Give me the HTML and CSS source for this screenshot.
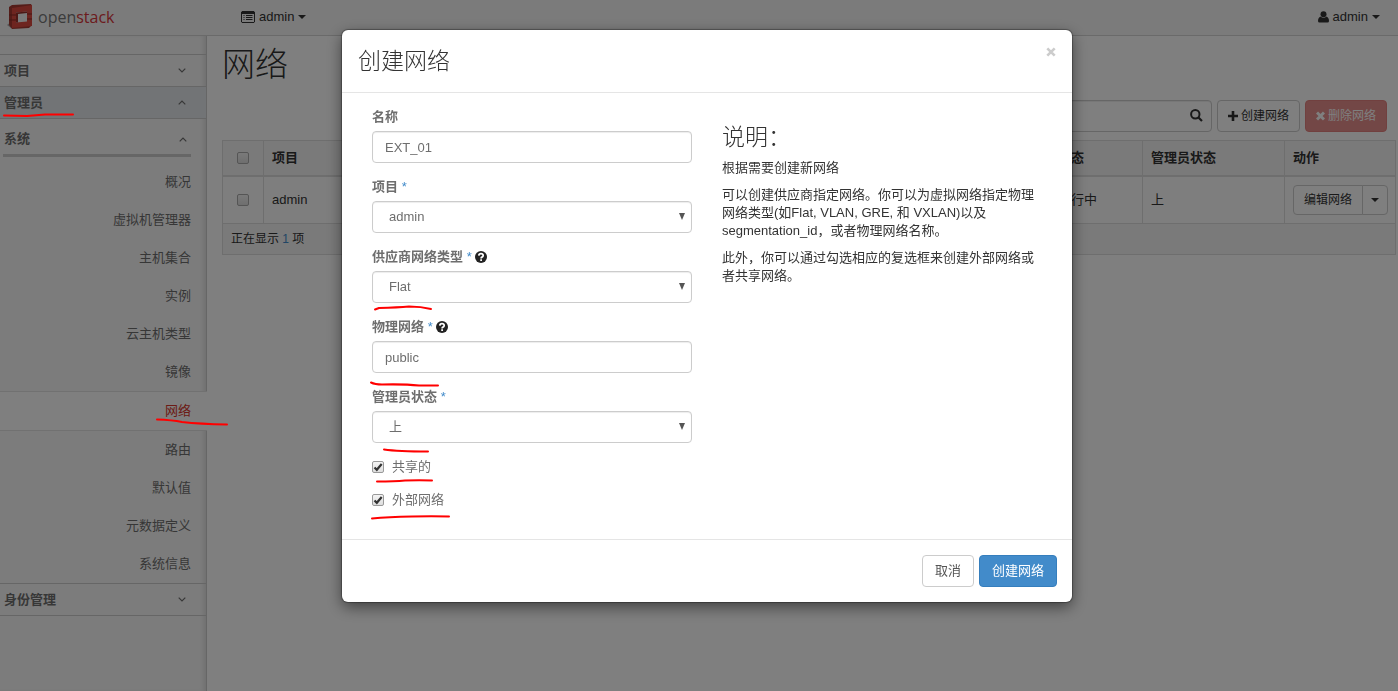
FILE: index.html
```
<!DOCTYPE html>
<html lang="zh-CN">
<head>
<meta charset="utf-8">
<title>网络 - OpenStack Dashboard</title>
<link rel="stylesheet" href="styles.css">
</head>
<body>
<header class="topbar">
  <a class="brand" href="#">
    <svg class="brand-mark" width="28" height="26" viewBox="0 0 28 26" aria-hidden="true">
      <path d="M0 21l4-3v6z" fill="#aaa"/>
      <path d="M2 3L5 1l19-1 1 2v19l-3 3-17 1-3-4z" fill="#a83a32"/>
      <path d="M5 4l20-3v21L5 24z" fill="#dc4a40"/>
      <path d="M9 8.500l11-1v10l-11 1z" fill="#f4f4f4"/>
      <path d="M9 8.500l11-1v1.500l-9 1v8.500H9z" fill="#98302a"/>
      <path d="M2 11h7M20 10h5M2 16h7M20 15h5" stroke="#8b2a25" fill="none"/>
    </svg>
    <span class="brand-text">open<b>stack</b></span>
  </a>
  <a class="nav-link" href="#">
    <svg width="14" height="12" viewBox="0 0 14 12" aria-hidden="true"><path d="M1 .5h12l.5.5v10l-.5.5H1L.5 11V1z" fill="none" stroke="currentColor"/><path d="M1 1h12v2H1z" fill="currentColor"/><path d="M2.500 4.500h1M5 4.500h6.500M2.500 6.500h1M5 6.500h6.500M2.500 8.500h1M5 8.500h6.500" stroke="currentColor"/></svg>
    admin <span class="caret"></span>
  </a>
  <a class="nav-link user" href="#">
    <svg width="11" height="12" viewBox="0 0 11 12" aria-hidden="true"><circle cx="5.500" cy="3.200" r="3" fill="currentColor"/><path d="M2.500 5.500Q5.500 8 8.500 5.500 11 6.500 11 10q0 1.500-1.500 1.500h-8Q0 11.500 0 10q0-3.500 2.500-4.500z" fill="currentColor"/></svg>
    admin <span class="caret"></span>
  </a>
</header>

<div class="page">
  <nav class="sidebar">
    <a class="section" href="#">项目 <svg width="8" height="5" viewBox="0 0 8 5"><path d="M.7.7L4 4 7.300.7" fill="none" stroke="currentColor" stroke-width="1.200"/></svg></a>
    <a class="section open" href="#">管理员 <svg width="8" height="5" viewBox="0 0 8 5"><path d="M.7 4.300L4 1l3.300 3.300" fill="none" stroke="currentColor" stroke-width="1.200"/></svg></a>
    <div class="group">
      <a class="group-title" href="#">系统 <svg width="8" height="5" viewBox="0 0 8 5"><path d="M.7 4.300L4 1l3.300 3.300" fill="none" stroke="currentColor" stroke-width="1.200"/></svg></a>
      <a class="item" href="#">概况</a>
      <a class="item" href="#">虚拟机管理器</a>
      <a class="item" href="#">主机集合</a>
      <a class="item" href="#">实例</a>
      <a class="item" href="#">云主机类型</a>
      <a class="item" href="#">镜像</a>
      <a class="item active" href="#">网络</a>
      <a class="item" href="#">路由</a>
      <a class="item" href="#">默认值</a>
      <a class="item" href="#">元数据定义</a>
      <a class="item" href="#">系统信息</a>
    </div>
    <a class="section last" href="#">身份管理 <svg width="8" height="5" viewBox="0 0 8 5"><path d="M.7.7L4 4 7.300.7" fill="none" stroke="currentColor" stroke-width="1.200"/></svg></a>
  </nav>

  <main class="content">
    <h1>网络</h1>
    <div class="toolbar">
      <div class="search">
        <input type="search" aria-label="筛选">
        <svg width="13" height="13" viewBox="0 0 13 13" aria-hidden="true"><circle cx="5.300" cy="5.300" r="4.200" fill="none" stroke="currentColor" stroke-width="2"/><path d="M8.500 8.500l3.500 3.500" stroke="currentColor" stroke-width="2.200"/></svg>
      </div>
      <button class="btn small" type="button"><svg width="10" height="10" viewBox="0 0 10 10" aria-hidden="true"><path d="M3.700 0h2.600v3.700H10v2.600H6.300V10H3.700V6.300H0V3.700h3.700z" fill="currentColor"/></svg>创建网络</button>
      <button class="btn small danger" type="button" disabled><svg width="9" height="10" viewBox="0 0 9 10" aria-hidden="true"><path d="M1 1.500l7 7M8 1.500l-7 7" stroke="currentColor" stroke-width="3"/></svg>删除网络</button>
    </div>
    <table class="grid">
      <colgroup><col class="c-check"><col><col class="c-status"><col class="c-admin"><col class="c-action"></colgroup>
      <thead>
        <tr><th><input class="tick" type="checkbox" aria-label="全选"></th><th>项目</th><th>状态</th><th>管理员状态</th><th>动作</th></tr>
      </thead>
      <tbody>
        <tr>
          <td><input class="tick" type="checkbox" aria-label="选择 admin"></td><td>admin</td><td>运行中</td><td>上</td>
          <td><div class="split"><button class="btn small" type="button">编辑网络</button><button class="btn small more" type="button" aria-label="更多动作"><span class="caret"></span></button></div></td>
        </tr>
      </tbody>
      <tfoot><tr><td colspan="5">正在显示 <span class="count">1</span> 项</td></tr></tfoot>
    </table>
  </main>
</div>

<div class="backdrop">
  <form class="modal" role="dialog" aria-labelledby="dlg-title">
    <div class="modal-head">
      <h3 id="dlg-title">创建网络</h3>
      <button class="close" type="button" aria-label="关闭"><svg width="10" height="10" viewBox="0 0 10 10"><path d="M1.300 1.300l7.400 7.400M8.700 1.300L1.300 8.700" stroke="currentColor" stroke-width="2.600"/></svg></button>
    </div>
    <div class="modal-body">
      <div class="fields">
        <div class="field">
          <label for="name">名称</label>
          <input class="control" id="name" type="text" value="EXT_01">
        </div>
        <div class="field">
          <label for="project">项目 <span class="req">*</span></label>
          <div class="pick"><select class="control" id="project"><option>admin</option></select></div>
        </div>
        <div class="field">
          <label for="type">供应商网络类型 <span class="req">*</span> <svg class="help" width="12" height="12" viewBox="0 0 11 11"><circle cx="5.500" cy="5.500" r="5.500"/><path d="M3.500 4.200Q3.600 2.500 5.500 2.500t2 1.600q0 1-1.100 1.500-.8.400-.8 1.200M5.600 7.600v1.500" fill="none" stroke="#fff" stroke-width="1.600"/></svg></label>
          <div class="pick"><select class="control" id="type"><option>Flat</option></select></div>
        </div>
        <div class="field">
          <label for="physical">物理网络 <span class="req">*</span> <svg class="help" width="12" height="12" viewBox="0 0 11 11"><circle cx="5.500" cy="5.500" r="5.500"/><path d="M3.500 4.200Q3.600 2.500 5.500 2.500t2 1.600q0 1-1.100 1.500-.8.400-.8 1.200M5.600 7.600v1.500" fill="none" stroke="#fff" stroke-width="1.600"/></svg></label>
          <input class="control" id="physical" type="text" value="public">
        </div>
        <div class="field">
          <label for="state">管理员状态 <span class="req">*</span></label>
          <div class="pick"><select class="control" id="state"><option>上</option></select></div>
        </div>
        <label class="check"><span class="tick-box"><input class="tick" type="checkbox" checked><svg width="12" height="12" viewBox="0 0 12 12" aria-hidden="true"><path d="M2.500 6.500l2.300 2.300L9.700 3" fill="none" stroke="#333" stroke-width="2.200"/></svg></span>共享的</label>
        <label class="check"><span class="tick-box"><input class="tick" type="checkbox" checked><svg width="12" height="12" viewBox="0 0 12 12" aria-hidden="true"><path d="M2.500 6.500l2.300 2.300L9.700 3" fill="none" stroke="#333" stroke-width="2.200"/></svg></span>外部网络</label>
      </div>
      <div class="info">
        <h3>说明：</h3>
        <p>根据需要创建新网络</p>
        <p>可以创建供应商指定网络。你可以为虚拟网络指定物理网络类型(如Flat, VLAN, GRE, 和 VXLAN)以及segmentation_id，或者物理网络名称。</p>
        <p>此外，你可以通过勾选相应的复选框来创建外部网络或者共享网络。</p>
      </div>
    </div>
    <div class="modal-foot">
      <button class="btn cancel" type="button">取消</button>
      <button class="btn primary" type="submit">创建网络</button>
    </div>
  </form>
</div>

<svg class="marks" width="460" height="530" viewBox="0 0 460 530" aria-hidden="true">
  <path d="M4 115.500L27 116 45 114.500 73 114.500"/>
  <path d="M157 419.500Q172 420 182 422 200 424 227 424.500"/>
  <path d="M375 309.500L379 308Q398 307.500 409 306.500 421 306.500 431 309"/>
  <path d="M371 382.500Q375 384.500 382 384.500 405 384 419 385.500L438 385.500"/>
  <path d="M384 449.500Q398 451.500 428 451.500"/>
  <path d="M377 481.500Q395 481.500 405 480.500 420 480 432 480.500"/>
  <path d="M372 518.500Q388 517 412 516.500 432 516 449 516.500"/>
</svg>
</body>
</html>
```

FILE: styles.css
```
* { box-sizing: border-box; }
body {
  margin: 0;
  min-height: 100vh;
  display: flex;
  flex-direction: column;
  background: #fff;
  color: #333;
  font: 13px/18px "Liberation Sans", "Noto Sans CJK SC", sans-serif;
}
a { color: inherit; text-decoration: none; }
h1, h3 { margin: 0; font-weight: 300; }
button, input, select { font: inherit; color: inherit; }

.topbar {
  display: flex;
  align-items: center;
  height: 36px;
  padding: 0 18px 2px 7px;
  background: #f6f6f6;
  border-bottom: 1px solid #d4d4d4;
}
.brand { display: flex; align-items: center; gap: 3px; width: 234px; color: #777; }
.brand-text { font: 16px/20px "Liberation Sans Narrow", "Open Sans", sans-serif; }
.brand-text b { font-weight: 400; color: #d9373c; }
.nav-link { display: flex; align-items: center; gap: 4px; }
.user { margin-left: auto; }
.caret { border: 4px solid transparent; border-top-color: currentColor; border-bottom: 0; }

.page { display: flex; flex: 1; }
.sidebar {
  width: 207px;
  flex: none;
  padding-top: 18px;
  background: #f9f9f9;
  border-right: 1px solid #ccc;
  box-shadow: inset -4px 0 5px -2px #ddd;
  color: #6e6e6e;
}
.section {
  display: flex;
  align-items: center;
  justify-content: space-between;
  height: 32px;
  padding: 0 20px 0 4px;
  border-top: 1px solid #ccc;
  font-weight: 700;
}
.section.open { height: 33px; border-bottom: 1px solid #ccc; background: #e4e8ec; }
.section.last { height: 33px; border-bottom: 1px solid #ccc; }
.group-title {
  display: flex;
  align-items: center;
  justify-content: space-between;
  height: 38px;
  margin: 0 15px 6px 3px;
  padding: 5px 4px 0 1px;
  border-bottom: 3px solid #ccc;
  font-weight: 700;
}
.item { display: block; padding: 10px 15px; text-align: right; }
.item.active {
  margin-right: -1px;
  padding-right: 16px;
  border: 1px solid #e2e2e2;
  border-width: 1px 0;
  background: #fff;
  color: #d9372c;
}

.content { flex: 1; padding: 10px 2px 0 15px; }
h1 { font-size: 33px; line-height: 38px; }
.toolbar { display: flex; justify-content: flex-end; gap: 5px; margin: 16px 9px 8px 0; }
.search { position: relative; width: 280px; }
.search input { width: 100%; height: 32px; border: 1px solid #ccc; border-radius: 4px; background: #fff; box-shadow: inset 0 1px 1px #eee; }
.search svg { position: absolute; right: 9px; top: 9px; }

.btn {
  display: inline-flex;
  align-items: center;
  justify-content: center;
  gap: 3px;
  height: 32px;
  padding: 0 12px;
  border: 1px solid #ccc;
  border-radius: 4px;
  background: #fff;
  white-space: nowrap;
}
.btn.small { padding: 0 10px; font-size: 12px; }
.btn.danger { background: #d9534f; border-color: #d43f3a; color: #fff; opacity: .65; }
.btn.cancel { color: #555; }
.btn.primary { background: #428bca; border-color: #357ebd; color: #fff; }
.split { display: flex; }
.split .btn { flex: none; height: 30px; border-radius: 4px 0 0 4px; }
.split .more { margin-left: -1px; padding: 0 8px; border-radius: 0 4px 4px 0; }

.grid { width: 100%; table-layout: fixed; border-collapse: collapse; border: 1px solid #ddd; }
.c-check { width: 41px; }
.c-status { width: 93px; }
.c-admin { width: 142px; }
.c-action { width: 111px; }
.grid th, .grid td { padding: 8px; border: 1px solid #ddd; text-align: left; }
.grid th { height: 35px; background: #f5f5f5; border-bottom: 2px solid #ddd; }
.grid th:first-child, .grid tbody td:first-child { text-align: center; }
.grid tbody td { height: 47px; background: #fcfcfc; }
.grid tfoot td { height: 31px; padding: 6px 8px; background: #f5f5f5; font-size: 12px; }
.count { color: #428bca; }

.tick {
  appearance: none;
  display: block;
  width: 12px;
  height: 12px;
  margin: 0;
  border: 1px solid #aaa;
  border-radius: 2px;
  background: linear-gradient(#f4f4f4, #dedede);
}
.grid .tick { margin: 0 auto; }

.backdrop {
  position: fixed;
  inset: 0;
  padding: 30px 0 30px 16px;
  overflow: hidden;
  background: rgba(0, 0, 0, .5);
}
.modal {
  max-width: 730px;
  margin: 0 auto;
  border-radius: 6px;
  background: #fff;
  box-shadow: 0 0 1px 1px rgba(0, 0, 0, .3), 0 5px 15px rgba(0, 0, 0, .5);
}
.modal-head {
  display: flex;
  align-items: flex-start;
  justify-content: space-between;
  padding: 17px 16px 16px;
  border-bottom: 1px solid #e5e5e5;
}
.modal h3 { font-size: 23px; line-height: 29px; }
.close { display: flex; padding: 0; border: 0; background: none; color: #ccc; }
.modal-body { display: grid; grid-template-columns: 320px 320px; gap: 30px; padding: 15px 30px 15px; }
.fields { color: #6e6e6e; }
.field { margin-bottom: 15px; }
.field label { display: block; margin-bottom: 5px; font-weight: 700; }
.req { color: #428bca; font-weight: 400; }
.help { vertical-align: -2px; fill: #222; }
.control {
  display: block;
  width: 100%;
  height: 32px;
  padding: 0 12px;
  border: 1px solid #ccc;
  border-radius: 4px;
  background: #fff;
  box-shadow: inset 0 1px 1px rgba(0, 0, 0, .075);
}
.pick { position: relative; }
.pick .control { appearance: none; padding: 0 16px; }
.pick::after {
  content: "";
  position: absolute;
  right: 7px;
  top: 12px;
  border: 3px solid transparent;
  border-top: 7px solid #555;
  border-bottom: 0;
}
.check { display: flex; align-items: center; gap: 8px; margin-bottom: 15px; }
.tick-box { position: relative; }
.tick-box svg { position: absolute; left: 0; top: 0; }
.tick-box .tick { border-color: #999; }
.info { padding-top: 15px; }
.info p { margin: 0 0 9px; }
.info h3 { margin-bottom: 7px; }
.modal-foot { display: flex; justify-content: flex-end; gap: 5px; padding: 15px; border-top: 1px solid #e5e5e5; }

.marks { position: absolute; left: 0; top: 0; pointer-events: none; }
.marks path { fill: none; stroke: #f00; stroke-width: 2; stroke-linecap: round; stroke-linejoin: round; }
```
